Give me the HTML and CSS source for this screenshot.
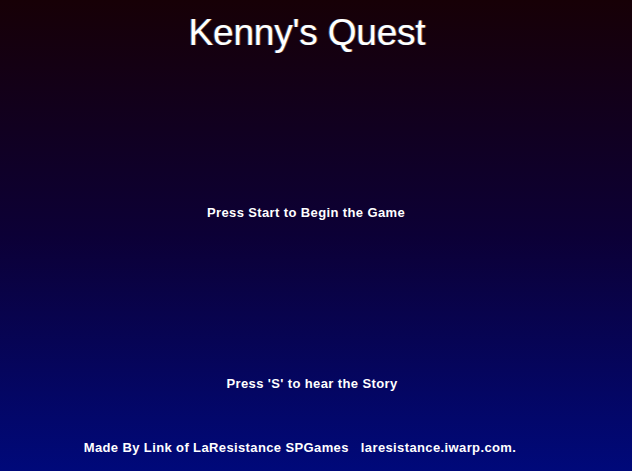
FILE: index.html
```html
<!DOCTYPE html>
<html>
<head>
<meta charset="utf-8">
<link rel="stylesheet" href="styles.css">
</head>
<body>
<main class="screen">
  <h1 class="title">Kenny's Quest</h1>
  <p class="prompt prompt-start">Press Start to Begin the Game</p>
  <p class="prompt prompt-story">Press 'S' to hear the Story</p>
  <p class="credits"><span>Made By Link of LaResistance SPGames</span><span class="site">laresistance.iwarp.com.</span></p>
</main>
</body>
</html>
```
FILE: styles.css
```css
html, body {
  margin: 0;
  padding: 0;
}
body {
  width: 632px;
  height: 471px;
  overflow: hidden;
  background: linear-gradient(to bottom, #170006 0%, #0c0036 50%, #00097a 100%);
  color: #ffffff;
}
.screen {
  display: flex;
  flex-direction: column;
  align-items: center;
  height: 471px;
}
.title {
  margin: 12px 0 0 -18px;
  font-family: "Liberation Sans", Arial, sans-serif;
  font-weight: normal;
  font-size: 37px;
  line-height: 42px;
  letter-spacing: -0.2px;
  text-shadow: -1px 0 0 rgba(120, 200, 255, 0.35), 1px 0 0 rgba(255, 200, 120, 0.35);
}
.prompt, .credits {
  font-family: "Liberation Sans", Arial, sans-serif;
  font-weight: bold;
  font-size: 13px;
  line-height: 16px;
  letter-spacing: 0.38px;
  margin: 0;
}
.prompt-start {
  margin-top: 151px;
  margin-left: -20px;
}
.prompt-story {
  margin-top: 155px;
  margin-left: -8px;
}
.credits {
  margin-top: 48px;
  margin-left: -32px;
  display: flex;
  gap: 12px;
}
```
